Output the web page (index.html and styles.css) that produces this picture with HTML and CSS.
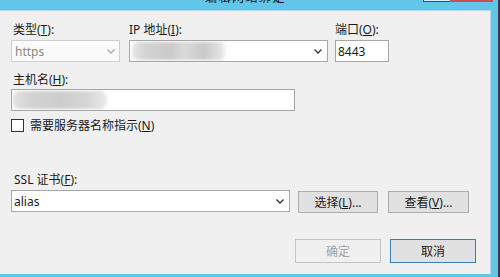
FILE: index.html
```html
<!DOCTYPE html>
<html lang="zh-CN">
<head>
<meta charset="utf-8">
<link rel="stylesheet" href="styles.css">
</head>
<body>
<div class="window">
  <div class="titlebar">
    <span class="title">编辑网站绑定</span>
    <span class="spacer"></span>
    <span class="btn-min"></span>
    <span class="btn-close"></span>
  </div>
  <div class="panel">
    <div class="row1">
      <div class="col col-type">
        <label class="lbl">类型(<u>T</u>):</label>
        <div class="field select disabled">
          <span class="val">https</span>
          <svg class="chev" width="8" height="5" viewBox="0 0 8 5"><polyline points="0.5,0.5 4,4 7.5,0.5" fill="none" stroke="#a8a8a8" stroke-width="1.3"/></svg>
        </div>
      </div>
      <div class="col col-ip">
        <label class="lbl">IP 地址(<u>I</u>):</label>
        <div class="field select">
          <span class="blur blur-ip"></span>
          <span class="grow"></span>
          <svg class="chev" width="8" height="5" viewBox="0 0 8 5"><polyline points="0.5,0.5 4,4 7.5,0.5" fill="none" stroke="#333" stroke-width="1.3"/></svg>
        </div>
      </div>
      <div class="col col-port">
        <label class="lbl">端口(<u>O</u>):</label>
        <div class="field"><span class="val dark">8443</span></div>
      </div>
    </div>

    <div class="row2">
      <label class="lbl">主机名(<u>H</u>):</label>
      <div class="field host"><span class="blur blur-host"></span></div>
    </div>

    <div class="checkrow">
      <span class="box"></span>
      <span class="cklbl">需要服务器名称指示(<u>N</u>)</span>
    </div>

    <div class="ssl">
      <label class="lbl">SSL 证书(<u>F</u>):</label>
      <div class="sslrow">
        <div class="field select cert">
          <span class="val dark">alias</span>
          <span class="grow"></span>
          <svg class="chev" width="8" height="5" viewBox="0 0 8 5"><polyline points="0.5,0.5 4,4 7.5,0.5" fill="none" stroke="#333" stroke-width="1.3"/></svg>
        </div>
        <button class="btn b-sel">选择(<u>L</u>)...</button>
        <button class="btn b-view">查看(<u>V</u>)...</button>
      </div>
    </div>

    <div class="footer">
      <button class="btn big off">确定</button>
      <button class="btn big def">取消</button>
    </div>
  </div>
  <div class="bottom"></div>
</div>
<div class="edge"></div>
</body>
</html>
```
FILE: styles.css
```css
html, body {
  margin: 0;
  padding: 0;
}
body {
  width: 500px;
  height: 277px;
  overflow: hidden;
  display: flex;
  background: #62c6e9;
  font-family: "Noto Sans", "Noto Sans CJK SC", sans-serif;
  font-size: 12px;
  color: #1a1a1a;
}
.window {
  width: 498px;
  height: 277px;
  display: flex;
  flex-direction: column;
}
.edge {
  width: 2px;
  height: 277px;
  background: #3a3f44;
}
.titlebar {
  height: 10px;
  display: flex;
  overflow: hidden;
}
.title {
  margin-left: 205px;
  margin-top: -9px;
  font-family: "Noto Sans CJK SC", sans-serif;
  font-size: 12px;
  line-height: 12px;
  letter-spacing: 1.5px;
  color: #111;
}
.spacer { flex: 1; }
.btn-min {
  width: 26px;
  height: 1px;
  background: #d6eef8;
  border-left: 1px solid #4a4a4a;
  border-bottom: 1px solid #4a4a4a;
}
.btn-close {
  width: 43px;
  height: 2px;
  background: #c7504a;
  margin-right: 5px;
}
.panel {
  width: 491px;
  height: 264px;
  background: #f0f0f0;
  border-top: 1px solid #bcd9e6;
  border-right: 1px solid #bcd9e6;
  padding: 11px 0 0 11px;
  box-sizing: border-box;
  display: flex;
  flex-direction: column;
}
.bottom {
  height: 2px;
}
.lbl {
  display: block;
  height: 16px;
  line-height: 16px;
  margin-bottom: 2px;
  padding-left: 2px;
  white-space: nowrap;
}
.row1 {
  display: flex;
}
.col-type { width: 109px; margin-right: 9px; }
.col-ip { width: 199px; margin-right: 7px; }
.col-port { width: 54px; }
.col-ip .lbl, .col-port .lbl { padding-left: 0; }
.field {
  height: 22px;
  box-sizing: border-box;
  border: 1px solid #a6a6a6;
  background: #fff;
  display: flex;
  align-items: center;
  overflow: hidden;
}
.field.disabled {
  border-color: #cfcfcf;
  background: #fbfbfb;
}
.val {
  padding-left: 3px;
  color: #888;
  font-size: 12px;
}
.val.dark { color: #1a1a1a; padding-left: 2px; }
.select { justify-content: space-between; }
.chev { margin-right: 5px; flex: none; }
.disabled .chev { margin-right: 4px; }
.grow { flex: 1; }
.blur {
  display: block;
  height: 18px;
  filter: blur(1.5px);
  border-radius: 6px;
}
.blur-ip {
  width: 95px;
  margin-left: 2px;
  background: linear-gradient(90deg, #e6e6e6 0%, #d3d3d3 15%, #cacaca 40%, #dadada 55%, #c9c9c9 75%, #e0e0e0 92%, #fafafa 100%);
}
.row2 {
  margin-top: 10px;
}
.row2 .lbl { margin-bottom: 1px; }
.host { width: 284px; }
.blur-host {
  width: 94px;
  margin-left: 1px;
  background: linear-gradient(90deg, #e2e2e2 0%, #d2d2d2 20%, #cdcdcd 50%, #d6d6d6 80%, #ececec 100%);
}
.checkrow {
  margin-top: 8px;
  display: flex;
  align-items: center;
  height: 13px;
}
.box {
  width: 13px;
  height: 13px;
  box-sizing: border-box;
  border: 1px solid #333;
  background: #fff;
}
.cklbl {
  margin-left: 6px;
  line-height: 13px;
}
.ssl {
  margin-top: 40px;
}
.ssl .lbl { padding-left: 3px; }
.sslrow {
  display: flex;
  align-items: flex-start;
}
.cert { width: 279px; }
.btn {
  font-family: "Noto Sans", "Noto Sans CJK SC", sans-serif;
  font-size: 12px;
  color: #1a1a1a;
  background: #e1e1e1;
  border: 1px solid #adadad;
  padding: 0;
  height: 22px;
  box-sizing: border-box;
  margin-top: 1px;
}
.b-sel { width: 80px; margin-left: 8px; }
.b-view { width: 81px; margin-left: 10px; }
.footer {
  margin-top: 26px;
  display: flex;
  justify-content: flex-end;
  padding-right: 14px;
}
.big {
  width: 86px;
  height: 24px;
  margin-top: 0;
}
.off {
  background: #f0f0f0;
  border-color: #c4c4c4;
  color: #a3a3a3;
}
.def {
  margin-left: 9px;
  border-color: #3c7fb1;
}
```
